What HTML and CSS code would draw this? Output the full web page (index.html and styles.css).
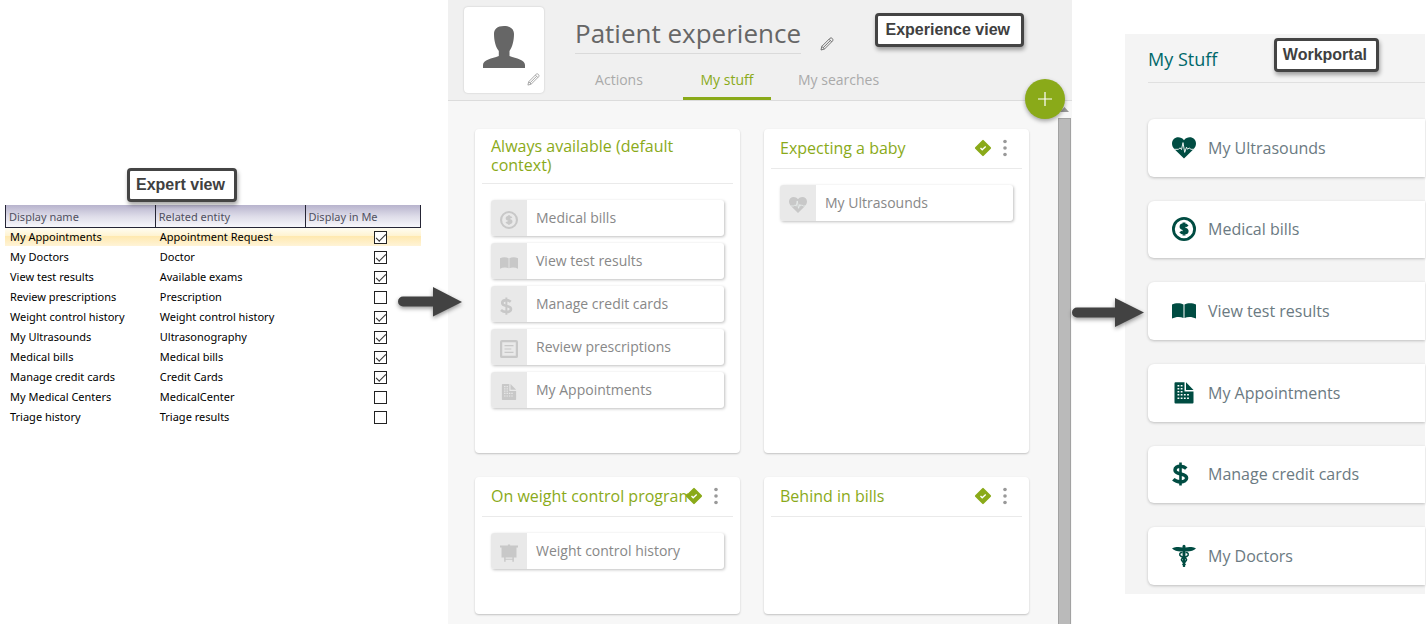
FILE: index.html
```html
<!DOCTYPE html>
<html lang="en">
<head>
<meta charset="utf-8">
<title>Patient experience</title>
<link rel="stylesheet" href="styles.css">
</head>
<body>
<svg class="defs" aria-hidden="true">
  <symbol id="i-coin" viewBox="0 0 24 24">
    <circle cx="12" cy="12" r="10.6" fill="none" stroke="currentColor" stroke-width="2.8"/>
    <path d="M15.3 9.4C14.6 8.2 13.4 7.8 12 7.8c-1.700 0-3 .7-3 2 0 2.900 6.200 1.300 6.200 4.300 0 1.400-1.400 2.100-3.200 2.100-1.500 0-2.800-.5-3.500-1.700M12 5.600v12.800" fill="none" stroke="currentColor" stroke-width="2.900"/>
  </symbol>
  <symbol id="i-book" viewBox="0 0 24 24">
    <path d="M0 5.500C3.500 3.800 8.500 3.800 11.500 5.500V19C8.500 17.400 3.500 17.600 0 19.500zM12.500 5.500C15.500 3.800 20.500 3.800 24 5.500V19.500C20.500 17.600 15.500 17.400 12.500 19z" fill="currentColor"/>
  </symbol>
  <symbol id="i-dollar" viewBox="0 0 24 24">
    <path d="M14.300 6.400C12.500 4.700 10.500 4.200 8.300 4.200 5.200 4.200 3 5.700 3 8c0 5.500 11.600 2.500 11.600 8 0 2.500-2.600 3.900-5.900 3.900C6 19.900 3.300 19.200 1.300 17.300" fill="none" stroke="currentColor" stroke-width="3.500"/>
    <path d="M8.500.5v23" stroke="currentColor" stroke-width="2.600"/>
  </symbol>
  <symbol id="i-list" viewBox="0 0 24 24">
    <rect x="1.500" y="1.500" width="21" height="21" rx="1" fill="none" stroke="currentColor" stroke-width="3"/>
    <path d="M6 7.500h12M6 12h9M6 16.500h12" stroke="currentColor" stroke-width="1.500"/>
  </symbol>
  <symbol id="i-doc" viewBox="0 0 24 24">
    <path fill-rule="evenodd" fill="currentColor" d="M3.500 1.200H12.500V10.500H21.500V21.500a1 1 0 0 1-1 1H3.500a1 1 0 0 1-1-1V2.200a1 1 0 0 1 1-1zM5.500 4h1.800v1.500H5.500zM8.700 4h1.800v1.500H8.700zM5.500 7h1.800v1.500H5.500zM8.700 7h1.800v1.500H8.700zM5.500 10h1.800v1.500H5.500zM8.700 10h1.800v1.500H8.700zM5.500 13h1.800v1.500H5.500zM8.700 13h1.800v1.500H8.700zM11.900 13h1.800v1.500h-1.800zM15.100 13h1.800v1.500h-1.800zM5.500 16.500h1.800V18H5.500zM8.700 16.500h1.800V18H8.700zM11.900 16.500h1.800V18h-1.800zM15.100 16.500h1.800V18h-1.800z"/>
    <path d="M14 1.200L21.500 9H14z" fill="currentColor"/>
  </symbol>
  <symbol id="i-heart" viewBox="0 0 24 24">
    <path d="M12 22.500L2.500 13.200C-.8 9.800-.6 5.300 1.800 3 4.600.4 9.400.8 12 4.200c2.600-3.400 7.400-3.800 10.200-1.200 2.400 2.300 2.600 6.800-.7 10.200z" fill="currentColor"/>
    <path d="M2 13.300h4.500l1.500-1.500 1.500 1.800 1.500-7 1.700 9.800 1.800-5.200 1 2 1.700-1.200 1.800 1.300h3.500" fill="none" class="pulse" stroke-width="1"/>
  </symbol>
  <symbol id="i-board" viewBox="0 0 24 24">
    <path d="M10.500 2V.5h3V2H24v2.500h-2V18H2V4.500H0V2zM5.500 18h2v5.500h-2zM16.500 18h2v5.500h-2zM7 19.500h10V21H7z" fill="currentColor"/>
  </symbol>
  <symbol id="i-staff" viewBox="0 0 24 24">
    <path d="M0 4.500C3 3 7 2.700 10.500 3.600V2.200a1.500 1.500 0 0 1 3 0v1.400C17 2.700 21 3 24 4.500 21.500 6.800 17 8 13.500 7.300L13.200 22.500q-1.200 1.200-2.400 0L10.500 7.300C7 8 2.500 6.800 0 4.500z" fill="currentColor"/>
    <path d="M10.500 8.500C7.500 8 6.800 11 9 12.300l5 2.200c1.500 1.500 0 2.800-2 3.500M13.500 8.500c3-.5 3.700 2.500 1.500 3.800l-5 2.200c-1.500 1.500 0 2.800 2 3.500M10.300 18l3.400 2.500M13.700 18l-3.400 2.500" fill="none" stroke="currentColor" stroke-width="1.500"/>
  </symbol>
  <symbol id="i-pencil" viewBox="0 0 14 14">
    <path d="M1 13l.8-3.600L10 1.200q1.300-.8 2.300.3t.4 2.300L4.500 12zM1.800 9.400L4.500 12M9 2.200L11.700 4.900M3.200 10.700L10.300 3.600" fill="none" stroke="currentColor" stroke-width=".9"/>
  </symbol>
  <symbol id="i-ok" viewBox="0 0 18 18">
    <rect x="3" y="3" width="12" height="12" rx="1" transform="rotate(45 9 9)" fill="#8aaa19"/>
    <path d="M6.500 9l1.700 1.700 3.500-3.200" fill="none" stroke="#fff" stroke-width="1.400"/>
  </symbol>
  <symbol id="i-dots" viewBox="0 0 4 18">
    <circle cx="2" cy="2.500" r="1.800" fill="currentColor"/><circle cx="2" cy="9" r="1.800" fill="currentColor"/><circle cx="2" cy="15.500" r="1.800" fill="currentColor"/>
  </symbol>
</svg>

<main class="board">
  <section class="expert">
    <div class="callout callout-expert">Expert view</div>
    <table class="grid">
      <thead><tr><th>Display name</th><th>Related entity</th><th>Display in Me</th></tr></thead>
      <tbody>
        <tr class="selected"><td>My Appointments</td><td>Appointment Request</td><td><input type="checkbox" aria-label="Display My Appointments" checked></td></tr>
        <tr><td>My Doctors</td><td>Doctor</td><td><input type="checkbox" aria-label="Display My Doctors" checked></td></tr>
        <tr><td>View test results</td><td>Available exams</td><td><input type="checkbox" aria-label="Display View test results" checked></td></tr>
        <tr><td>Review prescriptions</td><td>Prescription</td><td><input type="checkbox" aria-label="Display Review prescriptions"></td></tr>
        <tr><td>Weight control history</td><td>Weight control history</td><td><input type="checkbox" aria-label="Display Weight control history" checked></td></tr>
        <tr><td>My Ultrasounds</td><td>Ultrasonography</td><td><input type="checkbox" aria-label="Display My Ultrasounds" checked></td></tr>
        <tr><td>Medical bills</td><td>Medical bills</td><td><input type="checkbox" aria-label="Display Medical bills" checked></td></tr>
        <tr><td>Manage credit cards</td><td>Credit Cards</td><td><input type="checkbox" aria-label="Display Manage credit cards" checked></td></tr>
        <tr><td>My Medical Centers</td><td>MedicalCenter</td><td><input type="checkbox" aria-label="Display My Medical Centers"></td></tr>
        <tr><td>Triage history</td><td>Triage results</td><td><input type="checkbox" aria-label="Display Triage history"></td></tr>
      </tbody>
    </table>
  </section>

  <section class="experience">
    <svg class="arrow arrow-first" width="66" height="36" viewBox="0 0 66 36" aria-hidden="true"><path d="M5 10.500H35V1L64 16 35 30.500V20.500H5a5 5 0 0 1 0-10z"/></svg>
    <div class="callout callout-experience">Experience view</div>
    <header class="head">
      <div class="avatar">
        <svg class="person" viewBox="0 0 42 42" aria-hidden="true"><path d="M21 0c7 0 10 3.500 10 8 0 6-1.500 13-4.500 17v5c7 2.500 15.500 3.500 15.500 9v3H0v-3c0-5.500 9-6.500 15.800-9v-5C12.500 21 11 14 11 8c0-4.500 3-8 10-8z" fill="#666"/></svg>
        <button class="edit edit-photo" aria-label="Edit picture"><svg><use href="#i-pencil"/></svg></button>
      </div>
      <div class="head-main">
        <div class="title-row">
          <h1>Patient experience</h1>
          <button class="edit edit-name" aria-label="Edit name"><svg><use href="#i-pencil"/></svg></button>
        </div>
        <nav class="tabs">
          <button class="tab">Actions</button>
          <button class="tab active">My stuff</button>
          <button class="tab">My searches</button>
        </nav>
      </div>
      <button class="add" aria-label="Add context"><svg viewBox="0 0 14 14"><path d="M7 0v14M0 7h14" stroke="#fff" stroke-width="1.200"/></svg></button>
    </header>
    <div class="content">
      <div class="cards">
        <article class="card">
          <header class="card-head wrap"><h2>Always available (default context)</h2></header>
          <div class="items">
            <a class="item" href="#"><span class="cell"><svg><use href="#i-coin"/></svg></span><span class="label">Medical bills</span></a>
            <a class="item" href="#"><span class="cell"><svg><use href="#i-book"/></svg></span><span class="label">View test results</span></a>
            <a class="item" href="#"><span class="cell"><svg><use href="#i-dollar"/></svg></span><span class="label">Manage credit cards</span></a>
            <a class="item" href="#"><span class="cell"><svg><use href="#i-list"/></svg></span><span class="label">Review prescriptions</span></a>
            <a class="item" href="#"><span class="cell"><svg><use href="#i-doc"/></svg></span><span class="label">My Appointments</span></a>
          </div>
        </article>
        <article class="card">
          <header class="card-head"><h2>Expecting a baby</h2>
            <div class="tools"><svg class="ok"><use href="#i-ok"/></svg><button class="more" aria-label="More options"><svg><use href="#i-dots"/></svg></button></div></header>
          <div class="items">
            <a class="item" href="#"><span class="cell"><svg><use href="#i-heart"/></svg></span><span class="label">My Ultrasounds</span></a>
          </div>
        </article>
        <article class="card">
          <header class="card-head"><h2>On weight control program</h2>
            <div class="tools"><svg class="ok"><use href="#i-ok"/></svg><button class="more" aria-label="More options"><svg><use href="#i-dots"/></svg></button></div></header>
          <div class="items">
            <a class="item" href="#"><span class="cell"><svg><use href="#i-board"/></svg></span><span class="label">Weight control history</span></a>
          </div>
        </article>
        <article class="card">
          <header class="card-head"><h2>Behind in bills</h2>
            <div class="tools"><svg class="ok"><use href="#i-ok"/></svg><button class="more" aria-label="More options"><svg><use href="#i-dots"/></svg></button></div></header>
        </article>
      </div>
      <div class="scroll" aria-hidden="true">
        <svg class="scroll-up" viewBox="0 0 9 5"><path d="M0 5L4.500 0 9 5z" fill="#999"/></svg>
        <div class="thumb"></div>
      </div>
    </div>
  </section>

  <section class="portal">
    <svg class="arrow arrow-second" width="73" height="36" viewBox="0 0 73 36" aria-hidden="true"><path d="M5 10.500H43V1L72 15.500 43 30V20.500H5a5 5 0 0 1 0-10z"/></svg>
    <div class="callout callout-portal">Workportal</div>
    <h2>My Stuff</h2>
    <div class="links">
      <a class="link" href="#"><svg><use href="#i-heart"/></svg>My Ultrasounds</a>
      <a class="link" href="#"><svg><use href="#i-coin"/></svg>Medical bills</a>
      <a class="link" href="#"><svg><use href="#i-book"/></svg>View test results</a>
      <a class="link" href="#"><svg><use href="#i-doc"/></svg>My Appointments</a>
      <a class="link" href="#"><svg><use href="#i-dollar"/></svg>Manage credit cards</a>
      <a class="link" href="#"><svg><use href="#i-staff"/></svg>My Doctors</a>
    </div>
  </section>
</main>
</body>
</html>
```
FILE: styles.css
```css
* { box-sizing: border-box; }
body { margin: 0; background: #fff; font-family: "Open Sans", "Noto Sans", sans-serif; }
button { border: 0; padding: 0; background: none; font: inherit; color: inherit; cursor: pointer; }
a { color: inherit; text-decoration: none; }
h1, h2 { margin: 0; font-weight: 400; }
svg { display: block; }
.defs { position: absolute; width: 0; height: 0; }

.board { display: grid; grid-template-columns: 448fr 624fr 354fr; min-height: 100vh; overflow: hidden; }

.callout {
  position: absolute; z-index: 2; padding: 5px 9px 5px 6px; border: 3px solid #444; border-radius: 4px;
  background: #fff; color: #404040; font: bold 16px/18px "Liberation Sans", Arial, sans-serif;
  white-space: nowrap; box-shadow: 1px 3px 4px rgba(0, 0, 0, .35);
}
.callout-expert { left: 127px; top: 168px; }
.callout-experience { right: 48px; top: 13px; padding: 5px 11px 5px 7px; }
.callout-portal { right: 46px; top: 4px; }

.arrow { position: absolute; z-index: 2; fill: #424242; filter: drop-shadow(0 2px 2px rgba(0, 0, 0, .4)); }
.arrow-first { left: -50px; top: 286px; }
.arrow-second { left: -53px; top: 263px; }

.expert { position: relative; padding: 205px 27px 0 5px; }
.grid { width: 100%; table-layout: fixed; border-collapse: separate; border-spacing: 0; font: 11px/15px "Noto Sans", "Open Sans", sans-serif; color: #000; }
.grid th {
  height: 23px; padding: 0 3px; border-left: 1px solid #252535; border-bottom: 1px solid #252535;
  background: linear-gradient(#b7b3cd, #dddbe8 50%, #f7f7fb); color: #505060; font-weight: 400; text-align: left;
}
.grid th:nth-child(-n+2) { width: 36%; }
.grid th:last-child { border-right: 1px solid #252535; }
.grid td { height: 20px; padding: 0 5px 4px; white-space: nowrap; }
.grid td:last-child { padding: 0 34px 1px 0; }
.grid input {
  appearance: none; display: block; width: 13px; height: 13px; margin: 0 0 0 auto; border: 1px solid #222; background: #fff;
}
.grid input:checked::after {
  content: ""; display: block; width: 9px; height: 4px; margin: 2px 0 0 1px; border: solid #333;
  border-width: 0 0 1px 1px; transform: rotate(-45deg);
}
.selected td { background: linear-gradient(#fffdf2, #fff3d0 40%, #ffe9b0 42%, #fff3d5 88%, #fff 92%); }

.experience { position: relative; display: flex; flex-direction: column; background: #f7f7f7; }
.head { position: relative; display: flex; gap: 31px; padding: 7px 16px 0; min-height: 101px; background: #f0f0f0; border-bottom: 1px solid #dcdcdc; }
.avatar { position: relative; width: 80px; height: 86px; padding: 19px 0 0 19px; background: #fff; border-radius: 4px; box-shadow: 0 0 2px rgba(0, 0, 0, .2); }
.person { width: 42px; height: 42px; }
.edit svg { width: 14px; height: 14px; }
.edit-photo { position: absolute; right: 4px; bottom: 7px; color: #999; }
.edit-photo svg { width: 13px; height: 13px; }
.edit-name { padding-bottom: 3px; color: #666; }
.head-main { display: flex; flex-direction: column; justify-content: space-between; }
.title-row { display: flex; align-items: flex-end; gap: 19px; }
h1 { padding: 8px 0 2px; border-bottom: 1px solid #dadada; color: #666; font-size: 26px; line-height: 36px; }
.tabs { display: flex; gap: 20px; }
.tab { min-width: 88px; padding: 9px 0 7px; border-bottom: 3px solid transparent; color: #aaa; font-size: 14px; line-height: 20px; }
.tab:last-child { padding-left: 7px; }
.tab.active { color: #8aaa19; border-color: #8aaa19; }
.add {
  position: absolute; z-index: 1; right: 7px; bottom: -19px; display: grid; place-items: center; width: 40px; height: 40px;
  border-radius: 50%; background: #8aaa19; box-shadow: 0 2px 4px rgba(0, 0, 0, .35);
}
.add svg { width: 14px; height: 14px; }

.content { flex: 1; display: flex; }
.cards { flex: 1; display: grid; grid-template-columns: 1fr 1fr; align-content: start; gap: 24px; padding: 28px 29px 10px 27px; }
.card { min-width: 0; padding-bottom: 45px; background: #fff; border-radius: 4px; box-shadow: 0 1px 2px rgba(0, 0, 0, .22); }
.card-head { position: relative; margin: 0 7px; padding: 9px 9px 10px; border-bottom: 1px solid #eaeaea; color: #8aaa19; }
.card-head h2 { max-width: 197px; overflow: hidden; white-space: nowrap; font-size: 16px; line-height: 20px; }
.card-head.wrap { padding: 8px 9px; }
.wrap h2 { max-width: none; overflow: visible; line-height: 19px; white-space: normal; }
.tools { position: absolute; top: 10px; right: 15px; display: flex; align-items: center; gap: 11px; color: #999; }
.ok { width: 18px; height: 18px; }
.more svg { width: 4px; height: 18px; }
.items { display: grid; gap: 7px; padding: 16px 16px 0; }
.item { display: flex; min-height: 36px; border-radius: 3px; background: #fff; box-shadow: 1px 1px 3px rgba(0, 0, 0, .25); color: #888; font-size: 14px; line-height: 20px; overflow: hidden; }
.cell { display: grid; place-items: center; width: 36px; padding-top: 3px; background: #e9e9e9; color: #c8c8c8; }
.cell svg { width: 18px; height: 18px; }
.pulse { stroke: #e9efee; }
.cell .pulse { stroke: #dadada; }
.label { padding: 8px 9px; }
.scroll { display: flex; flex-direction: column; width: 14px; padding: 6px 1px 0 0; }
.scroll-up { width: 9px; height: 5px; margin: 0 auto 6px; }
.thumb { flex: 1; background: #bababa; border: 1px solid #a2a2a2; border-bottom: 0; }

.portal { position: relative; align-self: start; display: flex; flex-direction: column; min-height: 560px; margin: 34px 1px 0 53px; padding: 12px 0 9px 23px; background: #f4f4f4; }
.portal h2 { padding-bottom: 10px; border-bottom: 1px solid #e0e0e0; color: #00686a; font-size: 18px; line-height: 26px; }
.links { flex: 1; display: grid; grid-auto-rows: 1fr; gap: 24px; padding-top: 36px; }
.link {
  display: flex; align-items: center; gap: 12px; padding: 0 24px; border-radius: 6px 0 0 6px; background: #fff;
  box-shadow: 0 1px 3px rgba(0, 0, 0, .22); color: #6b7a82; font-size: 16px; line-height: 24px;
}
.link svg { width: 24px; height: 24px; color: #004c42; }
```
